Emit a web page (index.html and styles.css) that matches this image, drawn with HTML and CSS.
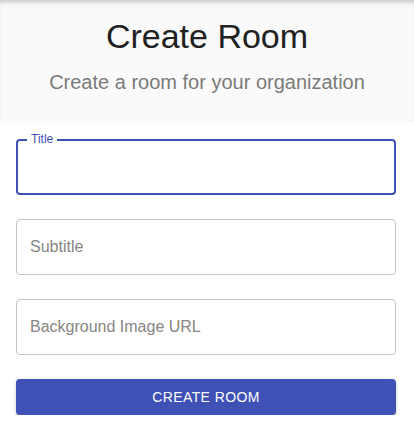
FILE: index.html
```html
<!DOCTYPE html>
<html lang="en">
<head>
<meta charset="utf-8">
<title>Create Room</title>
<link rel="stylesheet" href="styles.css">
</head>
<body>
<header class="hero">
  <h1 class="hero-title">Create Room</h1>
  <p class="hero-sub">Create a room for your organization</p>
</header>
<form class="form">
  <div class="field field-focused">
    <span class="field-label">Title</span>
  </div>
  <div class="field">
    <span class="field-placeholder">Subtitle</span>
  </div>
  <div class="field">
    <span class="field-placeholder">Background Image URL</span>
  </div>
  <button type="button" class="btn">Create Room</button>
</form>
</body>
</html>
```
FILE: styles.css
```css
html, body {
  margin: 0;
  padding: 0;
  background: #ffffff;
  font-family: "Liberation Sans", Arial, sans-serif;
}

.hero {
  height: 123px;
  box-sizing: border-box;
  background: #fafafa;
  text-align: center;
  padding-top: 16px;
  box-shadow: inset 0 5px 5px -3px rgba(0, 0, 0, 0.22);
}

.hero-title {
  margin: 0;
  font-size: 34px;
  line-height: 40px;
  font-weight: 400;
  color: #212121;
}

.hero-sub {
  margin: 14px 0 0;
  font-size: 20px;
  line-height: 24px;
  color: #7a7a7a;
}

.form {
  display: flex;
  flex-direction: column;
  gap: 24px;
  padding: 16px 18px 0 16px;
}

.field {
  position: relative;
  height: 56px;
  box-sizing: border-box;
  border: 1px solid #c4c4c4;
  border-radius: 4px;
  display: flex;
  align-items: center;
  padding: 0 13px;
}

.field-focused {
  border: 2px solid #3f51b5;
}

.field-label {
  position: absolute;
  top: -9px;
  left: 9px;
  padding: 0 4px;
  background: #ffffff;
  font-size: 12px;
  line-height: 14px;
  color: #3f51b5;
}

.field-placeholder {
  font-size: 16px;
  color: #858585;
}

.btn {
  height: 36px;
  border: 0;
  border-radius: 4px;
  background: #3f51b5;
  color: #ffffff;
  font-family: "Liberation Sans", Arial, sans-serif;
  font-size: 14px;
  letter-spacing: 0.4px;
  text-transform: uppercase;
  box-shadow: 0 3px 1px -2px rgba(0,0,0,0.2), 0 2px 2px 0 rgba(0,0,0,0.14), 0 1px 5px 0 rgba(0,0,0,0.12);
  padding: 0;
}
```
